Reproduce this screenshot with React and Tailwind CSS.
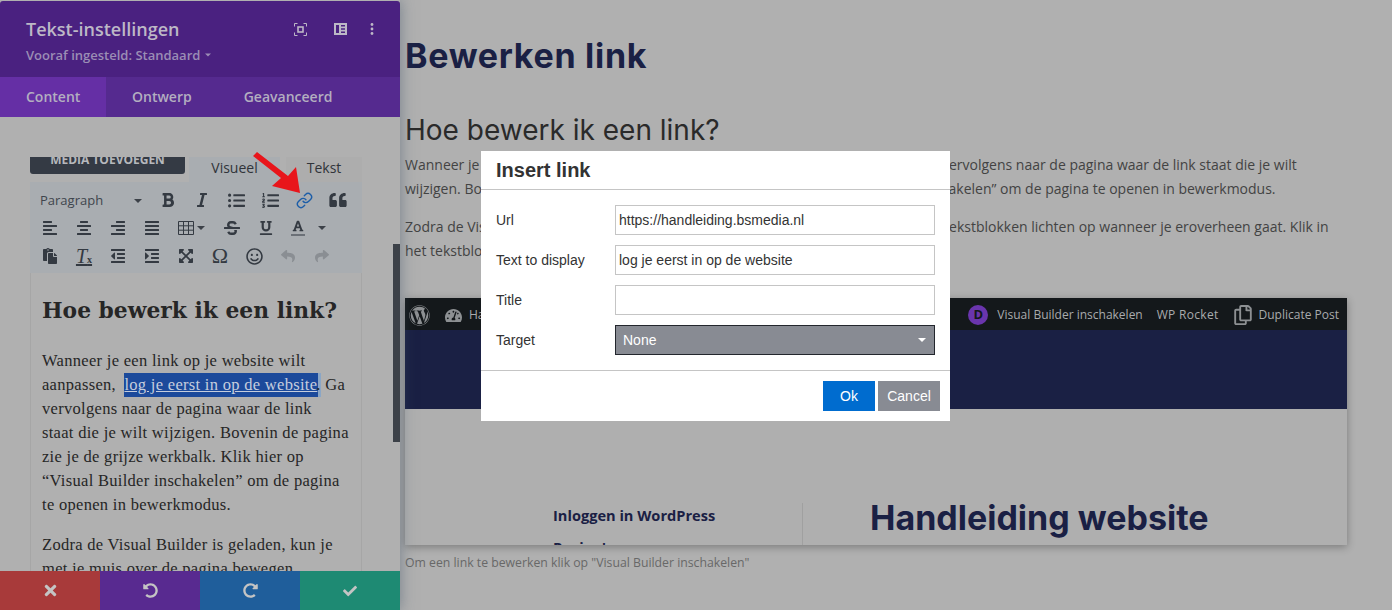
import React from 'react';
import {
  FaBold, FaItalic, FaListUl, FaListOl, FaQuoteLeft, FaAlignLeft, FaAlignCenter, FaAlignRight,
  FaAlignJustify, FaStrikethrough, FaUnderline, FaFont, FaPaste, FaOutdent, FaIndent,
  FaExpandArrowsAlt, FaRegSmile, FaReply, FaShare, FaTimes, FaUndoAlt, FaRedoAlt, FaCheck, FaWordpress,
  FaTachometerAlt, FaRegCopy,
} from 'react-icons/fa';
import { Link } from 'lucide-react';

const Caret = ({ className = 'border-t-[#3c4148]' }) => (
  <span className={`inline-block w-0 h-0 border-x-4 border-x-transparent border-t-4 ${className}`} />
);

const Tool = ({ children, color = 'text-[#343a42]' }) => (
  <div className={`w-[34px] h-7 flex items-center justify-center ${color}`}>{children}</div>
);

function Toolbar() {
  return (
    <div className="bg-[#a9adb1] h-[91px] pt-1 pl-[3px] flex flex-col">
      <div className="flex h-7 items-center">
        <div className="w-[118px] pt-px pl-[7px] pr-[9px] flex items-center justify-between font-['Open_Sans',sans-serif] text-[13px] text-[#3f454d]">
          Paragraph <Caret />
        </div>
        <Tool><FaBold size={16} /></Tool>
        <Tool><FaItalic size={16} /></Tool>
        <Tool><FaListUl size={17} /></Tool>
        <Tool><FaListOl size={17} /></Tool>
        <Tool color="text-[#1d5ea8]"><Link size={17} strokeWidth={2} /></Tool>
        <Tool><FaQuoteLeft size={16} className="scale-x-110" /></Tool>
      </div>
      <div className="flex h-7 items-center">
        <Tool><FaAlignLeft size={16} /></Tool>
        <Tool><FaAlignCenter size={16} /></Tool>
        <Tool><FaAlignRight size={16} /></Tool>
        <Tool><FaAlignJustify size={16} /></Tool>
        <div className="w-[46px] pl-[9px] flex items-center gap-[3px] text-[#343a42]">
          <svg width="16" height="14" viewBox="0 0 16 14" fill="none" stroke="currentColor">
            <path d="M.5.500h15v13H.5zM.5 4.800h15M.5 9.200h15M5.500.500v13M10.500.500v13" />
          </svg>
          <Caret />
        </div>
        <Tool><FaStrikethrough size={16} /></Tool>
        <Tool><FaUnderline size={14} /></Tool>
        <div className="w-[52px] pl-[8px] flex items-center gap-[13px] text-[#343a42]">
          <span className="flex flex-col items-center w-[14px]">
            <FaFont size={12} />
            <span className="block w-[14px] h-[2px] mt-[2px] bg-[#6b7077]" />
          </span>
          <Caret />
        </div>
      </div>
      <div className="flex h-7 items-center">
        <Tool><FaPaste size={16} /></Tool>
        <Tool>
          <span className="font-['Liberation_Serif',serif] italic text-[20px] leading-none underline">
            T<span className="not-italic font-bold text-[10px]">x</span>
          </span>
        </Tool>
        <Tool><FaOutdent size={16} /></Tool>
        <Tool><FaIndent size={16} /></Tool>
        <Tool><FaExpandArrowsAlt size={16} /></Tool>
        <Tool><span className="font-['Liberation_Serif',serif] text-[22px] leading-none">Ω</span></Tool>
        <Tool><FaRegSmile size={17} /></Tool>
        <Tool color="text-[#8a8e93]"><FaReply size={14} /></Tool>
        <Tool color="text-[#8a8e93]"><FaShare size={14} /></Tool>
      </div>
    </div>
  );
}

function SidePanel() {
  return (
    <aside className="relative z-10 w-[400px] h-[610px] pt-px flex flex-col shrink-0 bg-[#b0b0b0] shadow-[0_0_14px_rgba(70,90,110,0.55)] font-['Open_Sans',sans-serif]">
      <header className="h-[76px] bg-[#4a2180] rounded-t-[3px] pl-[26px] pr-[26px] pt-[16px] flex justify-between">
        <div>
          <div className="text-[18px] leading-[25px] font-semibold text-[#bdb8c6]">Tekst-instellingen</div>
          <div className="mt-[3px] text-[13px] leading-[20px] font-semibold text-[#9b8db5] flex items-center gap-[4px]">
            Vooraf ingesteld: Standaard <Caret className="border-t-[#9b8db5] scale-75" />
          </div>
        </div>
        <div className="flex items-start gap-[27px] pt-[6px] text-[#bdb8c6]">
          <svg width="13" height="13" viewBox="0 0 13 13" fill="none" stroke="currentColor">
            <path d="M.5 3.500v-3h3M9.500.500h3v3M12.500 9.500v3h-3M3.500 12.500h-3v-3" />
            <rect x="4" y="4" width="5" height="5" strokeWidth="1.6" />
          </svg>
          <svg width="13" height="12" viewBox="0 0 13 12" fill="currentColor">
            <path d="M0 0h13v12H0zM2 2v8h3V2zm5 0v1.500h4V2zm0 3.200v1.600h4V5.200zm0 3.300V10h4V8.500z" fillRule="evenodd" />
          </svg>
          <svg width="4" height="12" viewBox="0 0 4 12" fill="currentColor" className="ml-[-4px]">
            <circle cx="2" cy="1.500" r="1.400" /><circle cx="2" cy="6" r="1.400" /><circle cx="2" cy="10.500" r="1.400" />
          </svg>
        </div>
      </header>
      <nav className="h-10 bg-[#552a8f] flex text-[14px] font-semibold text-[#b3aec0]">
        <div className="w-[106px] pl-[26px] bg-[#652fa5] leading-10">Content</div>
        <div className="ml-[26px] leading-10">Ontwerp</div>
        <div className="ml-[52px] leading-10">Geavanceerd</div>
      </nav>
      <div className="flex-1 mt-10 overflow-hidden">
        <div className="-mt-3 ml-[30px] w-[332px]">
          <div className="flex items-end h-[37px]">
            <div className="w-[155px] h-[29px] mb-2 bg-[#343a44] rounded-b-[3px] text-center text-[12px] leading-[29px] font-bold text-[#b6b8bc]">
              MEDIA TOEVOEGEN
            </div>
            <div className="ml-[4px] w-[91px] h-[37px] pt-[12px] bg-[#a9adb1] text-center text-[14px] leading-[22px] text-[#30343a]">Visueel</div>
            <div className="ml-[6px] w-[76px] h-[37px] pt-[12px] bg-[#adadad] text-center text-[14px] leading-[22px] text-[#30343a]">Tekst</div>
          </div>
          <Toolbar />
          <div className="border-x border-[#a6a6a6] pl-[11px] pr-2 pt-5 text-[#262626] font-['Liberation_Serif',serif]">
            <h3 className="font-['DejaVu_Serif',serif] text-[21.800px] leading-9 font-bold whitespace-nowrap">Hoe bewerk ik een link?</h3>
            <p className="mt-5 text-[16.500px] leading-6 tracking-[0.3px] whitespace-nowrap">
              Wanneer je een link op je website wilt<br />
              aanpassen, <span className="inline-block h-6 ml-[4px] mr-[-2px] pr-[1px] bg-[#1c4a9b] text-[#c6cede] underline shadow-[3px_0_0_#8aa6c6]">log je eerst in op de website</span>. Ga<br />
              vervolgens naar de pagina waar de link<br />
              staat die je wilt wijzigen. Bovenin de pagina<br />
              zie je de grijze werkbalk. Klik hier op<br />
              “Visual Builder inschakelen” om de pagina<br />
              te openen in bewerkmodus.
            </p>
            <p className="mt-4 text-[16.500px] leading-6 tracking-[0.3px] whitespace-nowrap">
              Zodra de Visual Builder is geladen, kun je<br />
              met je muis over de pagina bewegen.
            </p>
          </div>
        </div>
      </div>
      <footer className="h-[39px] grid grid-cols-4 text-[#c4c4c4]">
        <div className="bg-[#a83a3a] flex items-center justify-center"><FaTimes size={17} /></div>
        <div className="bg-[#582a90] flex items-center justify-center"><FaUndoAlt size={15} /></div>
        <div className="bg-[#1f5e9b] flex items-center justify-center"><FaRedoAlt size={15} /></div>
        <div className="bg-[#1e8a73] flex items-center justify-center"><FaCheck size={14} /></div>
      </footer>
      {/* scrollbar */}
      <div className="absolute right-0 top-[244px] w-[7px] h-[198px] bg-[#3c4148]" />
    </aside>
  );
}

function Screenshot() {
  return (
    <div className="mt-[35px] w-[942px] h-[247px] overflow-hidden bg-[#afafaf] shadow-[0_2px_8px_rgba(0,0,0,0.3)]">
      <div className="h-8 bg-[#14181b] flex items-center pl-[4px] pr-2 pt-[2px] text-[12px] text-[#a9abad]">
        <FaWordpress size={21} className="text-[#8d9093]" />
        <FaTachometerAlt size={17} className="ml-[15px] text-[#8d9093]" />
        <span className="ml-[7px]">Handleiding</span>
        <span className="ml-auto w-5 h-5 rounded-full bg-[#6a35ad] text-[#14181b] text-[13px] font-bold flex items-center justify-center">D</span>
        <span className="ml-[9px]">Visual Builder inschakelen</span>
        <span className="ml-[14px] tracking-[0.3px]">WP Rocket</span>
        <FaRegCopy size={20} className="ml-[14px] text-[#8d9093]" />
        <span className="ml-[6px]">Duplicate Post</span>
      </div>
      <div className="h-[79px] bg-[#1a2044]" />
      <div className="flex pl-[148px] pt-[89px] text-[#1a2044]">
        <div className="w-[250px] h-[60px] mt-[5px] pt-[2px] border-r border-[#a0a0a0] text-[14.600px] leading-5 font-bold">
          <div>Inloggen in WordPress</div>
          <div className="mt-3">Pagina's</div>
        </div>
        <div className="ml-[67px] font-['Inter',sans-serif] text-[34px] leading-10 font-bold whitespace-nowrap">Handleiding website</div>
      </div>
    </div>
  );
}

function MainContent() {
  return (
    <main className="flex-1 pl-[5px] pt-9 font-['Open_Sans',sans-serif] overflow-hidden">
      <h1 className="font-['Inter',sans-serif] text-[34px] leading-10 font-bold tracking-[0.7px] text-[#1a2044]">Bewerken link</h1>
      <h2 className="mt-9 font-['Inter',sans-serif] text-[28px] leading-9 text-[#2a2a2a]">Hoe bewerk ik een link?</h2>
      <p className="mt-[5px] w-[930px] text-[14px] leading-6 text-[#434343]">
        Wanneer je een link op je website wilt aanpassen, log je eerst in op de website. Ga vervolgens naar de pagina waar de link staat die je wilt<br />
        wijzigen. Bo<span className="tracking-[-0.13px]">venin de pagina zie je de grijze werkbalk. Klik hier op “Visual Builder in</span>schakelen” om de pagina te openen in bewerkmodus.
      </p>
      <p className="mt-[14px] w-[930px] text-[14px] leading-6 text-[#434343]">
        Zodra de Visual Builder is geladen, kun je met je muis over de pagina bewegen. De tekstblokken lichten op wanneer je eroverheen gaat. Klik in<br />
        het tekstblok dat je wilt bewerken.
      </p>
      <Screenshot />
      <p className="mt-2 text-[12.250px] leading-5 text-[#686868]">Om een link te bewerken klik op "Visual Builder inschakelen"</p>
    </main>
  );
}

const Field = ({ label, children }) => (
  <div className="flex items-center h-[30px]">
    <label className="w-[119px] text-[14px] text-[#333]">{label}</label>
    {children}
  </div>
);

function LinkDialog() {
  const input = 'w-[320px] h-[30px] border border-[#c5c5c5] px-[3px] text-[14px] leading-[28px] text-[#333] font-["Liberation_Sans",sans-serif] outline-none';
  return (
    <div className="absolute z-20 left-[481px] top-[151px] w-[469px] h-[270px] bg-white font-['Liberation_Sans',sans-serif]">
      <div className="h-[39px] pl-[15px] border-b border-[#c5c5c5] text-[20px] leading-[38px] font-bold text-[#333]">Insert link</div>
      <div className="h-[181px] pl-[15px] pt-[15px] flex flex-col gap-[10px] border-b border-[#c5c5c5]">
        <Field label="Url"><input readOnly className={input} value="https://handleiding.bsmedia.nl" /></Field>
        <Field label="Text to display"><input readOnly className={input} value="log je eerst in op de website" /></Field>
        <Field label="Title"><input readOnly className={input} value="" /></Field>
        <Field label="Target">
          <div className="w-[320px] h-[30px] border border-[#23262d] bg-[#888b93] pl-[7px] pr-[8px] flex items-center justify-between text-[14px] text-white">
            None <Caret className="border-t-white" />
          </div>
        </Field>
      </div>
      <div className="flex justify-end gap-[3px] pt-[10px] pr-[10px] text-[14px] text-white">
        <div className="w-[52px] h-[30px] bg-[#006ccf] text-center leading-[30px]">Ok</div>
        <div className="w-[62px] h-[30px] bg-[#888b93] text-center leading-[30px]">Cancel</div>
      </div>
    </div>
  );
}

export default function App() {
  return (
    <div className="relative w-[1392px] h-[610px] overflow-hidden bg-[#b0b0b0] flex">
      <SidePanel />
      <MainContent />
      <LinkDialog />
      {/* rode pijl naar de link-knop */}
      <svg className="absolute z-30 left-[250px] top-[150px]" width="54" height="48" viewBox="0 0 54 48">
        <polygon points="3,6 7,2 38,26 46,17 50,43 22,36 31,28" fill="#e8151b" />
      </svg>
    </div>
  );
}
